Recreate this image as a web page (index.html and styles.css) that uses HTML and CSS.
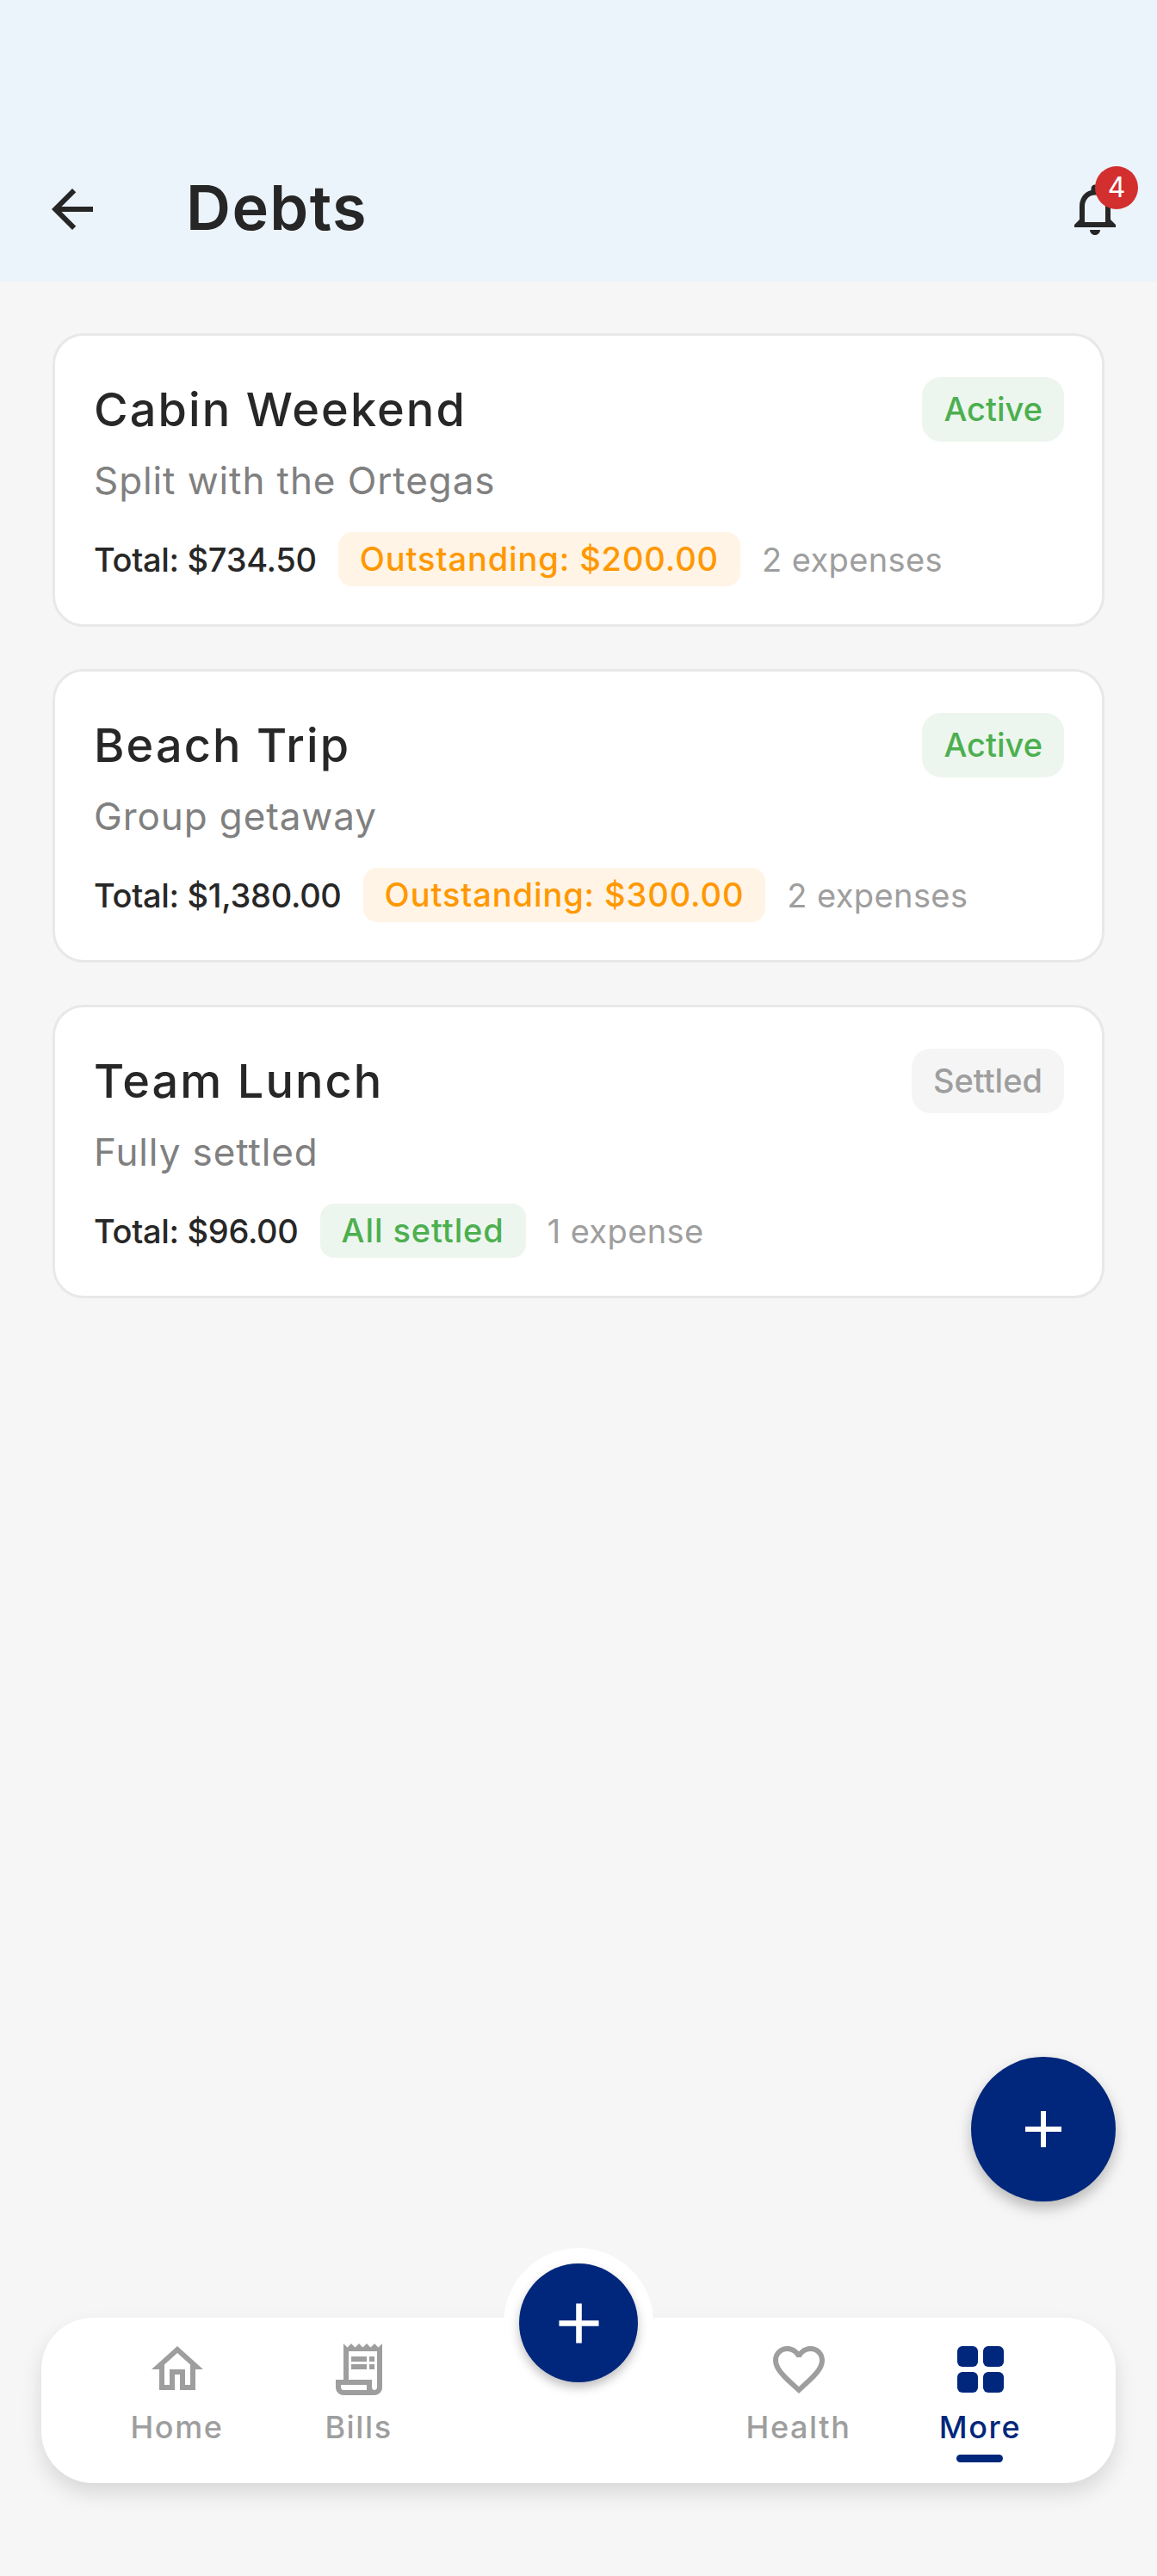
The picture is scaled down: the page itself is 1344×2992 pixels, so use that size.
FILE: index.html
```html
<!DOCTYPE html>
<html lang="en">
<head>
    <meta charset="UTF-8">
    <title>Debts</title>
    <link rel="stylesheet" href="styles.css">
</head>
<body>
    <div class="page">
        <header class="topbar">
            <svg class="icon" viewBox="0 0 24 24"><path d="M20 11H7.83l5.59-5.59L12 4l-8 8 8 8 1.41-1.41L7.83 13H20v-2z"/></svg>
            <h1 class="page-title">Debts</h1>
            <div class="bell">
                <svg class="icon" viewBox="0 0 24 24"><path d="M12 22c1.1 0 2-.9 2-2h-4c0 1.1.9 2 2 2zm6-6v-5c0-3.07-1.63-5.64-4.5-6.32V4c0-.83-.67-1.5-1.5-1.5s-1.5.67-1.5 1.5v.68C7.64 5.36 6 7.92 6 11v5l-2 2v1h16v-1l-2-2zm-2 1H8v-6c0-2.48 1.51-4.5 4-4.5s4 2.02 4 4.5v6z"/></svg>
                <span class="bell-count">4</span>
            </div>
        </header>

        <main class="debt-list">
            <section class="debt-card">
                <div class="debt-head">
                    <h2 class="debt-name">Cabin Weekend</h2>
                    <span class="status status-active">Active</span>
                </div>
                <p class="debt-note">Split with the Ortegas</p>
                <div class="debt-meta">
                    <span class="debt-total">Total: $734.50</span>
                    <span class="chip chip-due">Outstanding: $200.00</span>
                    <span class="debt-count">2 expenses</span>
                </div>
            </section>
            <section class="debt-card">
                <div class="debt-head">
                    <h2 class="debt-name">Beach Trip</h2>
                    <span class="status status-active">Active</span>
                </div>
                <p class="debt-note">Group getaway</p>
                <div class="debt-meta">
                    <span class="debt-total">Total: $1,380.00</span>
                    <span class="chip chip-due">Outstanding: $300.00</span>
                    <span class="debt-count">2 expenses</span>
                </div>
            </section>
            <section class="debt-card">
                <div class="debt-head">
                    <h2 class="debt-name">Team Lunch</h2>
                    <span class="status status-settled">Settled</span>
                </div>
                <p class="debt-note">Fully settled</p>
                <div class="debt-meta">
                    <span class="debt-total">Total: $96.00</span>
                    <span class="chip chip-done">All settled</span>
                    <span class="debt-count">1 expense</span>
                </div>
            </section>
        </main>

        <button class="fab">
            <svg class="icon" viewBox="0 0 24 24"><path d="M19 13h-6v6h-2v-6H5v-2h6V5h2v6h6v2z"/></svg>
        </button>

        <nav class="bottom-nav">
            <a class="nav-item">
                <svg class="icon" viewBox="0 0 24 24"><path d="M12 5.69l5 4.5V18h-2v-6H9v6H7v-7.81l5-4.5M12 3L2 12h3v8h6v-6h2v6h6v-8h3L12 3z"/></svg>
                <span>Home</span>
            </a>
            <a class="nav-item">
                <svg class="icon" viewBox="0 0 24 24"><path d="M19.5 3.5L18 2l-1.5 1.5L15 2l-1.5 1.5L12 2l-1.5 1.5L9 2 7.5 3.5 6 2v14H3v3c0 1.66 1.34 3 3 3h12c1.66 0 3-1.34 3-3V2l-1.5 1.5zM15 20H6c-.55 0-1-.45-1-1v-1h10v2zm4-1c0 .55-.45 1-1 1s-1-.45-1-1v-3H8V5h11v14z"/><path d="M9 7h6v2H9zM16 7h2v2h-2zM9 10h6v2H9zM16 10h2v2h-2z"/></svg>
                <span>Bills</span>
            </a>
            <div class="nav-gap"></div>
            <a class="nav-item">
                <svg class="icon" viewBox="0 0 24 24"><path d="M16.5 3c-1.74 0-3.41.81-4.5 2.09C10.91 3.81 9.24 3 7.5 3 4.42 3 2 5.42 2 8.5c0 3.78 3.4 6.86 8.55 11.54L12 21.35l1.45-1.32C18.6 15.36 22 12.28 22 8.5 22 5.42 19.58 3 16.5 3zm-4.4 15.55l-.1.1-.1-.1C7.14 14.24 4 11.39 4 8.5 4 6.5 5.5 5 7.5 5c1.54 0 3.04.99 3.57 2.36h1.87C13.46 5.99 14.96 5 16.5 5c2 0 3.5 1.5 3.5 3.5 0 2.89-3.14 5.74-7.9 10.05z"/></svg>
                <span>Health</span>
            </a>
            <a class="nav-item active">
                <svg class="icon" viewBox="0 0 24 24"><rect x="3" y="3" width="8" height="8" rx="2"/><rect x="13" y="3" width="8" height="8" rx="2"/><rect x="3" y="13" width="8" height="8" rx="2"/><rect x="13" y="13" width="8" height="8" rx="2"/></svg>
                <span>More</span>
            </a>
            <div class="nav-add">
                <button class="nav-add-btn">
                    <svg class="icon" viewBox="0 0 24 24"><path d="M19 13h-6v6h-2v-6H5v-2h6V5h2v6h6v2z"/></svg>
                </button>
            </div>
        </nav>
    </div>
</body>
</html>
```

FILE: styles.css
```css
* {
    margin: 0;
    padding: 0;
    box-sizing: border-box;
    font-family: 'Inter', 'Open Sans', sans-serif;
}

body {
    background-color: #f6f6f6;
}

.page {
    position: relative;
    width: 1344px;
    height: 2992px;
    display: flex;
    flex-direction: column;
    overflow: hidden;
}

.icon {
    display: block;
    width: 72px;
    height: 72px;
    fill: currentColor;
    flex-shrink: 0;
}

/* header */
.topbar {
    height: 327px;
    padding: 159px 36px 0 48px;
    display: flex;
    align-items: center;
    background-color: #ebf3fb;
    color: #262626;
}

.page-title {
    margin-left: 96px;
    padding-bottom: 6px;
    font-size: 72px;
    font-weight: 600;
    letter-spacing: 1.4px;
}

.bell {
    position: relative;
    margin-left: auto;
}

.bell-count {
    position: absolute;
    top: -14px;
    right: -14px;
    width: 50px;
    height: 50px;
    border-radius: 50%;
    background-color: #d32f2f;
    color: white;
    font-size: 32px;
    line-height: 50px;
    text-align: center;
}

/* cards */
.debt-list {
    padding: 60px 61px 0 61px;
    display: flex;
    flex-direction: column;
    gap: 49px;
}

.debt-card {
    height: 341px;
    padding: 48px 44px 44px 45px;
    background: white;
    border: 3px solid #e8e8e8;
    border-radius: 36px;
}

.debt-head {
    height: 75px;
    display: flex;
    align-items: center;
    justify-content: space-between;
}

.debt-name {
    font-size: 54px;
    font-weight: 500;
    letter-spacing: 2.1px;
    color: #272727;
}

.status {
    height: 75px;
    padding: 0 25px;
    border-radius: 22px;
    font-size: 38px;
    font-weight: 500;
    line-height: 75px;
}

.status-active {
    background-color: #edf6ee;
    color: #4caf50;
}

.status-settled {
    background-color: #f5f5f5;
    color: #9e9e9e;
}

.debt-note {
    margin-top: 15px;
    font-size: 44px;
    line-height: 60px;
    letter-spacing: 0.9px;
    color: #808080;
}

.debt-meta {
    margin-top: 30px;
    display: flex;
    align-items: center;
    gap: 25px;
}

.debt-total {
    font-size: 38px;
    font-weight: 500;
    letter-spacing: -0.3px;
    color: #272727;
}

.chip {
    height: 63px;
    padding: 0 25px;
    border-radius: 16px;
    font-size: 38px;
    line-height: 63px;
    letter-spacing: 0.9px;
    font-weight: 500;
}

.chip-due {
    background-color: #fff4e5;
    color: #ff9800;
}

.chip-done {
    background-color: #edf6ee;
    color: #4caf50;
}

.debt-count {
    font-size: 38px;
    letter-spacing: 0.4px;
    color: #9e9e9e;
}

/* floating add button */
.fab {
    position: absolute;
    left: 1128px;
    top: 2389px;
    width: 168px;
    height: 168px;
    display: flex;
    align-items: center;
    justify-content: center;
    border: none;
    border-radius: 50%;
    background-color: #00277b;
    color: white;
    box-shadow: 0 8px 16px rgba(0, 0, 0, 0.25);
}

/* bottom nav */
.bottom-nav {
    position: relative;
    height: 192px;
    margin: auto 48px 108px 48px;
    padding: 24px 52px 0 52px;
    display: grid;
    grid-template-columns: 211px 211px 300px 211px 211px;
    background: white;
    border-radius: 60px;
    box-shadow: 0 12px 24px rgba(0, 0, 0, 0.12);
}

.nav-item {
    display: flex;
    flex-direction: column;
    align-items: center;
    color: #9e9e9e;
    font-size: 36px;
    font-weight: 500;
    letter-spacing: 1.6px;
    line-height: 62px;
}

.nav-item.active {
    color: #00277b;
}

.nav-item.active span {
    position: relative;
}

.nav-item.active span::after {
    content: "";
    position: absolute;
    left: 50%;
    bottom: -10px;
    width: 54px;
    height: 9px;
    margin-left: -27px;
    border-radius: 5px;
    background-color: #00277b;
}

.nav-add {
    position: absolute;
    left: 537px;
    top: -81px;
    width: 174px;
    height: 174px;
    padding: 18px;
    border-radius: 50%;
    background-color: white;
}

.nav-add-btn {
    width: 138px;
    height: 138px;
    display: flex;
    align-items: center;
    justify-content: center;
    border: none;
    border-radius: 50%;
    background-color: #00277b;
    color: white;
    box-shadow: 0 6px 12px rgba(0, 0, 0, 0.25);
}

.nav-add-btn .icon {
    width: 79px;
    height: 79px;
}
```
